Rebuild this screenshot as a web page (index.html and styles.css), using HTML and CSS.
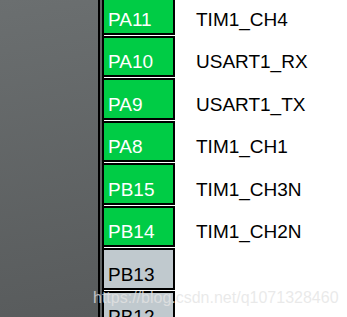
FILE: index.html
```html
<!DOCTYPE html>
<html lang="en">

<head>
     <meta charset="UTF-8">
     <title>Pinout</title>
     <link rel="stylesheet" href="styles.css">
</head>

<body>
     <div id="view">
          <div class="panel"></div>
          <div class="strip"></div>
          <div class="pins">
               <div class="row">
                    <div class="pin on">PA11</div>
                    <div class="fn">TIM1_CH4</div>
               </div>
               <div class="row">
                    <div class="pin on">PA10</div>
                    <div class="fn">USART1_RX</div>
               </div>
               <div class="row">
                    <div class="pin on">PA9</div>
                    <div class="fn">USART1_TX</div>
               </div>
               <div class="row">
                    <div class="pin on">PA8</div>
                    <div class="fn">TIM1_CH1</div>
               </div>
               <div class="row">
                    <div class="pin on">PB15</div>
                    <div class="fn">TIM1_CH3N</div>
               </div>
               <div class="row">
                    <div class="pin on">PB14</div>
                    <div class="fn">TIM1_CH2N</div>
               </div>
               <div class="row">
                    <div class="pin">PB13</div>
                    <div class="fn"></div>
               </div>
               <div class="row">
                    <div class="pin">PB12</div>
                    <div class="fn"></div>
               </div>
          </div>
          <div class="mark">https://blog.csdn.net/q1071328460</div>
     </div>
</body>

</html>
```
FILE: styles.css
```css
* {
     margin: 0;
     padding: 0;
     box-sizing: border-box;
}

body {
     background: #fff;
     font-family: "Liberation Sans", Arial, sans-serif;
}

#view {
     position: relative;
     display: flex;
     width: 347px;
     height: 317px;
     overflow: hidden;
}

.panel {
     width: 100px;
     flex: none;
     background: linear-gradient(170deg, #6b6f70, #585b5c);
     border-right: 2px solid #000;
}

.strip {
     width: 2px;
     flex: none;
     background: #606465;
}

.pins {
     flex: 1;
     margin-top: -8px;
     border-left: 2px solid #000;
}

.row {
     display: flex;
     align-items: flex-end;
     height: 42.5px;
     padding-top: 1px;
     font-size: 19px;
     line-height: 19px;
}

.pin {
     width: 71px;
     height: 100%;
     flex: none;
     padding: 0 0 4px 4px;
     display: flex;
     align-items: flex-end;
     border: 2px solid #000;
     border-left: 0;
     background: #c0c9ce;
     color: #000;
}

.pin.on {
     background: #00cc45;
     color: #fff;
}

.fn {
     margin-left: 21px;
     padding-bottom: 6px;
     color: #000;
}

.mark {
     position: absolute;
     left: 93px;
     top: 289px;
     font-size: 16px;
     color: rgba(228, 228, 228, 0.78);
     white-space: nowrap;
}
```
